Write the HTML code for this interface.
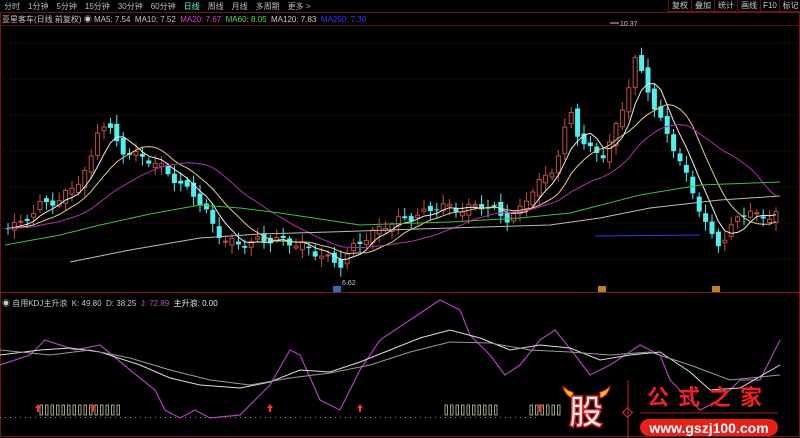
<!DOCTYPE html>
<html><head><meta charset="utf-8"><style>
body{margin:0;background:#000;width:800px;height:438px;overflow:hidden;font-family:"Liberation Sans","Noto Sans CJK SC",sans-serif;position:relative}
.t{position:absolute;font-size:8px;white-space:nowrap;color:#c8c8c8}
.btn{position:absolute;top:0;height:11px;border:1px solid #6a1010;border-top:none;font-size:8px;color:#ccc;text-align:center;line-height:11px}
svg{position:absolute;left:0;top:0}
</style></head><body>
<svg id="s" width="800" height="438">
<rect x="0.5" y="12.5" width="799" height="424" fill="none" stroke="#7a1414"/>
<line x1="0" y1="25.5" x2="800" y2="25.5" stroke="#5a1010"/>
<line x1="0" y1="292.5" x2="800" y2="292.5" stroke="#8a1818"/>
<g id="g"></g>
<polyline fill="none" stroke="#3fbf3f" stroke-width="1" points="5,245 60,235 100,225 150,214 200,205 240,208 280,213 360,225 450,222 520,218 570,213 640,195 700,185 780,182"/>
<polyline fill="none" stroke="#bbb" stroke-width="1" points="70,262 130,250 200,238 260,234 330,232 450,228 550,225 600,218 650,208 720,200 780,196"/>
<line x1="595" y1="236" x2="700" y2="235" stroke="#2a3aff"/>
<polyline fill="none" stroke="#b040c0" stroke-width="1.2" points="0,365 30,355 45,340 60,345 75,350 100,345 130,370 155,390 165,410 180,418 195,410 210,418 240,415 255,400 270,385 290,350 300,355 320,400 340,410 360,370 380,340 410,320 440,300 460,310 470,335 490,355 505,375 520,365 540,340 555,330 575,355 590,375 610,365 625,355 640,345 660,355 670,380 690,400 700,410 720,400 740,380 760,380 780,340"/>
<polyline fill="none" stroke="#ddd" stroke-width="1" points="0,355 40,350 70,348 100,352 140,365 170,378 200,385 240,388 270,382 300,370 330,372 360,362 390,350 420,338 450,330 480,338 510,350 540,345 570,348 600,360 630,355 660,352 690,372 710,390 740,388 780,365"/>
<polyline fill="none" stroke="#999" stroke-width="1" points="0,350 50,355 90,350 130,358 170,370 210,380 250,385 290,378 330,373 370,365 410,352 450,342 490,343 530,350 570,352 610,355 650,352 690,365 730,380 780,375"/>
<line x1="0" y1="417.5" x2="540" y2="417.5" stroke="#888" stroke-dasharray="1,4"/>
<g id="b"></g>
<line x1="628" y1="380" x2="628" y2="438" stroke="#c02020"/>
<rect x="624" y="409" width="7" height="7" transform="rotate(45 627.5 412.5)" fill="none" stroke="#e03030"/>
<line x1="640" y1="413" x2="778" y2="413" stroke="#a02020"/>
<rect x="640" y="419" width="138" height="17" rx="8.5" fill="#e8201a"/>
<path d="M563 386 q2 10 10 12 l0 -6 q-6 -1 -10 -6z M610 386 q-2 10 -10 12 l0 -6 q6 -1 10 -6z" fill="#f0c020" stroke="#e02010"/>
<text x="586" y="424" font-size="34" font-weight="bold" fill="#fff" stroke="#e02020" stroke-width="1.5" text-anchor="middle" font-family="Noto Sans CJK SC,sans-serif">股</text>
<text x="709" y="405" font-size="22" font-weight="bold" fill="#f02020" text-anchor="middle" letter-spacing="9" font-family="Noto Sans CJK SC,sans-serif">公式之家</text>
<text x="709" y="433" font-size="14" font-weight="bold" fill="#fff" text-anchor="middle">www.gszj100.com</text>
<text x="620" y="26" font-size="7" fill="#ccc">10.37</text><line x1="610" y1="23" x2="619" y2="23" stroke="#ccc"/>
<text x="342" y="285" font-size="7" fill="#ccc">6.62</text>
<rect x="333" y="286" width="8" height="6" fill="#3a6ab0"/>
<rect x="598" y="286" width="8" height="6" fill="#c08020"/>
<rect x="712" y="286" width="8" height="6" fill="#c08020"/>
</svg>
<div class="t" style="top:1px;left:4px;color:#bbb">分时　1分钟　5分钟　15分钟　30分钟　60分钟　<span style="color:#5fd">日线</span>　周线　月线　多周期　更多 &gt;</div>
<div class="t" style="top:14px;left:2px">亚星客车(日线 前复权) ◉ MA5: 7.54 &nbsp;MA10: 7.52 &nbsp;<span style="color:#d040d0">MA20: 7.67</span> &nbsp;<span style="color:#50e050">MA60: 8.05</span> &nbsp;MA120: 7.83 &nbsp;<span style="color:#3040ff">MA250: 7.30</span></div>
<div class="btn" style="left:668px;width:22px">复权</div><div class="btn" style="left:691px;width:22px">叠加</div><div class="btn" style="left:714px;width:22px">统计</div><div class="btn" style="left:737px;width:22px">画线</div><div class="btn" style="left:760px;width:18px">F10</div><div class="btn" style="left:779px;width:21px">标记</div>
<div class="t" style="top:298px;left:2px">◉ 自用KDJ主升浪 &nbsp;K: 49.80 &nbsp;D: 38.25 &nbsp;<span style="color:#c050c0">J: 72.89</span> &nbsp;<span style="color:#eee">主升浪: 0.00</span></div>
<script>
var P=[[5,225],[20,225],[40,205],[60,200],[75,185],[90,165],[100,120],[110,130],[120,150],[135,155],[150,160],[165,170],[180,185],[195,195],[205,210],[215,230],[225,240],[240,245],[260,240],[280,240],[300,245],[320,255],[340,265],[355,245],[370,235],[385,225],[400,220],[420,215],[440,205],[460,210],[480,205],[495,210],[505,220],[520,210],[535,185],[550,175],[560,150],[570,110],[580,140],[590,150],[605,155],[615,130],[625,100],[635,60],[645,80],[655,110],[665,130],[675,150],[690,185],[700,210],[710,235],[720,245],[730,230],[740,215],[750,210],[760,220],[770,215],[778,212]];
function f(x){for(var i=1;i<P.length;i++)if(x<=P[i][0]){var a=P[i-1],b=P[i],t=(x-a[0])/(b[0]-a[0]);return a[1]+t*(b[1]-a[1]);}return P[P.length-1][1];}
var g=document.getElementById('g'),h='',C=[],X=[],prev=225;
for(var x=8;x<=776;x+=6.4){var c=f(x)+Math.sin(x*1.7)*4,o=prev+Math.sin(x*0.9)*4;var hi=Math.min(o,c)-2-Math.abs(Math.sin(x*2.3))*7,lo=Math.max(o,c)+2+Math.abs(Math.cos(x*1.3))*7;
var up=c<o,col=up?'#c05040':'#50f0f0';h+='<line x1="'+x+'" y1="'+hi+'" x2="'+x+'" y2="'+lo+'" stroke="'+col+'"/>';
var t=Math.min(o,c),hh=Math.max(Math.abs(o-c),1);h+=up?'<rect x="'+(x-2)+'" y="'+t+'" width="4" height="'+hh+'" fill="#000" stroke="'+col+'"/>':'<rect x="'+(x-2.5)+'" y="'+t+'" width="5" height="'+hh+'" fill="'+col+'"/>';
C.push(c);X.push(x);prev=c;}
function ma(n,col){var pts=[];for(var i=0;i<C.length;i++){var s=0;for(var k=0;k<n;k++)s+=C[Math.max(0,i-k)];pts.push(X[i]+','+(s/n).toFixed(1));}return '<polyline fill="none" stroke="'+col+'" points="'+pts.join(' ')+'"/>';}
h+=ma(5,'#eee')+ma(10,'#e0d080')+ma(20,'#b030b0');
for(var y=43;y<280;y+=36)h='<line x1="0" y1="'+y+'" x2="800" y2="'+y+'" stroke="#300808" stroke-dasharray="2,2"/>'+h;
g.innerHTML=h;
var b='';function bars(a,z){for(var x=a;x<=z;x+=5.5)b+='<rect x="'+x+'" y="405" width="2.5" height="10" fill="none" stroke="#c8c8a0" stroke-width="0.8"/>';}
bars(40,120);bars(445,495);bars(530,560);
[38,93,270,360,540].forEach(function(x){b+='<path d="M'+x+' 404 l3 4 h-2 v4 h-2 v-4 h-2z" fill="#ff3030"/>';});
document.getElementById('b').innerHTML=b;
</script>
</body></html>
